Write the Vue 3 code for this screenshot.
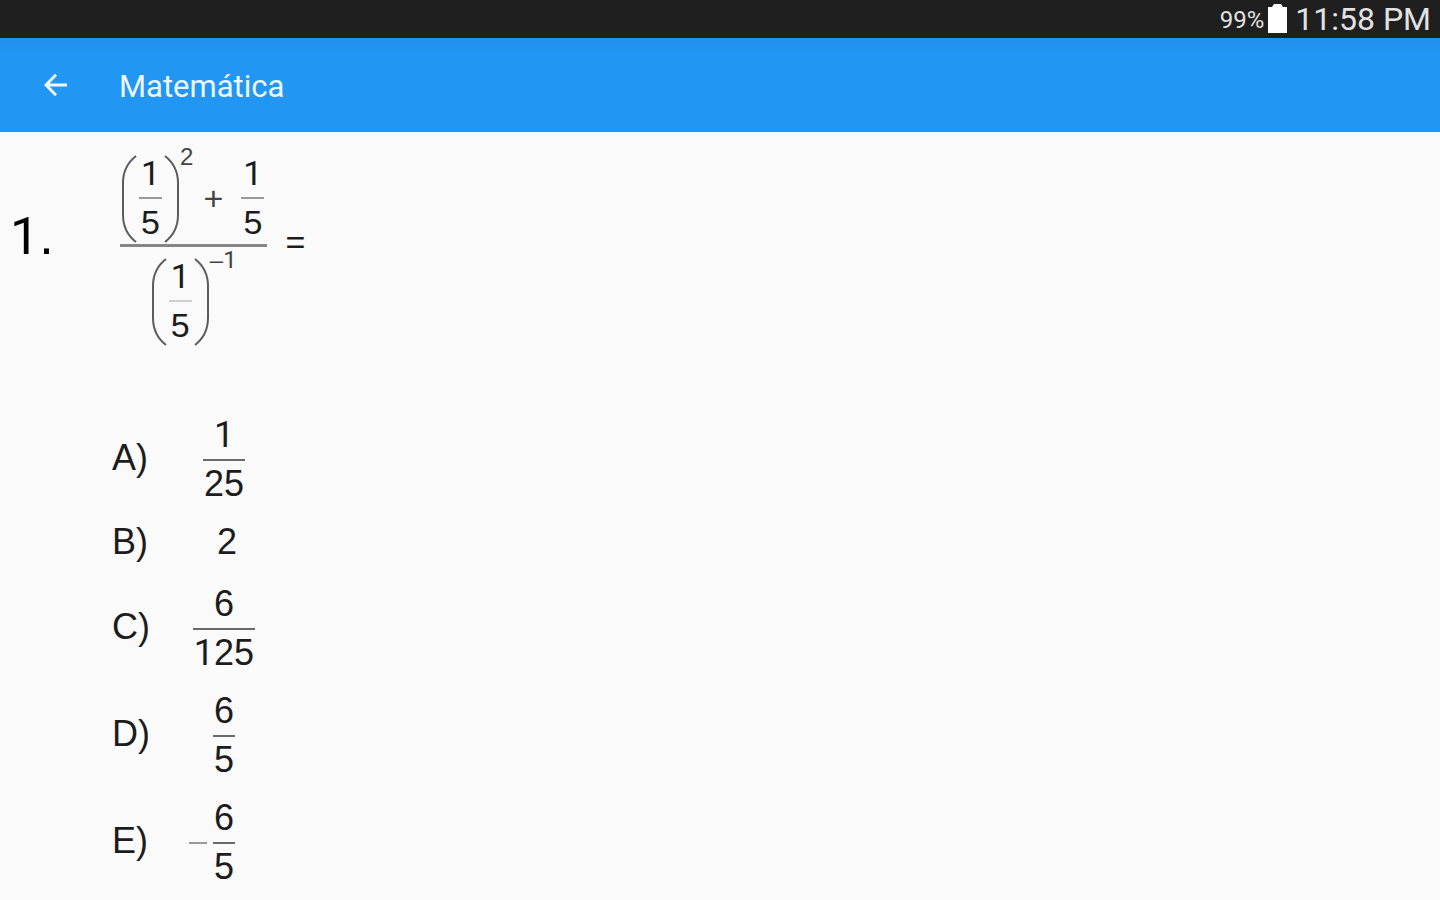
<script setup>
const digits = (text) => text.split('')

const answers = [
  { label: 'A)', num: '1', den: '25' },
  { label: 'B)', whole: '2' },
  { label: 'C)', num: '6', den: '125' },
  { label: 'D)', num: '6', den: '5' },
  { label: 'E)', num: '6', den: '5', negative: true }
]
</script>

<template>
  <div class="app">
    <div class="status">
      <span class="percent">99%</span>
      <svg class="battery" width="19" height="30" viewBox="0 0 19 30" aria-hidden="true">
        <path d="M6 0h7l2 3h4v26H0V3h4z" fill="#fff" />
      </svg>
      <span class="clock">11:58 PM</span>
    </div>

    <header class="toolbar">
      <button class="back" type="button" aria-label="Back">
        <svg width="24" height="24" viewBox="0 0 24 24" aria-hidden="true">
          <path d="M23 12H2.500M12 1.800L2 12L12 22.200" fill="none" stroke="#eef7ff" stroke-width="3" />
        </svg>
      </button>
      <h1 class="title">Matemática</h1>
    </header>

    <main class="content">
      <section class="question">
        <div class="number"><span class="one">1</span>.</div>
        <div class="expression">
          <div class="term">
            <svg class="paren" width="16" height="88" viewBox="0 0 16 88" aria-hidden="true">
              <path d="M15 1C6 8 2 16 2 28V60C2 72 6 80 15 87" />
            </svg>
            <span class="fraction small">
              <span class="num"><span class="one">1</span></span>
              <span class="den">5</span>
            </span>
            <svg class="paren" width="16" height="88" viewBox="0 0 16 88" aria-hidden="true">
              <path d="M1 1C10 8 14 16 14 28V60C14 72 10 80 1 87" />
            </svg>
            <span class="power">2</span>
            <span class="plus">+</span>
            <span class="fraction small">
              <span class="num"><span class="one">1</span></span>
              <span class="den">5</span>
            </span>
          </div>
          <div class="term below">
            <svg class="paren" width="16" height="88" viewBox="0 0 16 88" aria-hidden="true">
              <path d="M15 1C6 8 2 16 2 28V60C2 72 6 80 15 87" />
            </svg>
            <span class="fraction small faint">
              <span class="num"><span class="one">1</span></span>
              <span class="den">5</span>
            </span>
            <svg class="paren" width="16" height="88" viewBox="0 0 16 88" aria-hidden="true">
              <path d="M1 1C10 8 14 16 14 28V60C14 72 10 80 1 87" />
            </svg>
            <span class="power">–<span class="one">1</span></span>
          </div>
        </div>
        <span class="equals">=</span>
      </section>

      <ul class="answers">
        <li v-for="answer in answers" :key="answer.label" class="answer">
          <span class="label">{{ answer.label }}</span>
          <span class="value">
            <span v-if="answer.negative" class="minus" role="img" aria-label="minus"></span>
            <span v-if="answer.whole" class="whole">{{ answer.whole }}</span>
            <span v-else class="fraction">
              <span class="num"><span v-for="(d, i) in digits(answer.num)" :key="i" :class="{ one: d === '1' }">{{ d }}</span></span>
              <span class="den"><span v-for="(d, i) in digits(answer.den)" :key="i" :class="{ one: d === '1' }">{{ d }}</span></span>
            </span>
          </span>
        </li>
      </ul>
    </main>
  </div>
</template>

<style>
body {
  margin: 0;
  background: #fafafa;
}
</style>

<style scoped>
.app {
  font-family: "Liberation Sans", Arial, sans-serif;
  color: #1c1c1c;
}

.status {
  display: flex;
  align-items: center;
  justify-content: flex-end;
  height: 38px;
  box-sizing: border-box;
  padding-right: 9px;
  background: #1f1f1f;
  color: #e2e2e2;
  font-family: Roboto, sans-serif;
}

.percent {
  font-size: 24px;
  line-height: 28px;
  padding-top: 2px;
}

.battery {
  margin: 0 8px 0 4px;
}

.clock {
  font-size: 32px;
  line-height: 38px;
}

.toolbar {
  display: flex;
  align-items: center;
  height: 94px;
  background: linear-gradient(#2390e9, #2196f3 16px);
}

.back {
  display: flex;
  justify-content: center;
  width: 112px;
  padding: 0;
  border: 0;
  background: none;
}

.title {
  margin: 0 0 0 7px;
  padding-top: 4px;
  font: 400 31px/36px Roboto, sans-serif;
  color: #eef7ff;
}

.content {
  padding: 23px 8px 0;
}

.question {
  display: flex;
  align-items: flex-start;
}

.number {
  box-sizing: border-box;
  width: 112px;
  margin-top: 55px;
  padding-left: 2px;
  font-size: 52px;
  line-height: 52px;
  color: #000;
}

.one {
  font-family: Roboto, sans-serif;
  line-height: 0;
}

.term {
  display: flex;
  align-items: flex-start;
  justify-content: center;
  padding: 0 1px;
}

.below {
  margin-top: 1px;
  padding-top: 11px;
  border-top: 3px solid #858585;
}

.paren {
  flex: none;
  fill: none;
  stroke: #5c5c5c;
  stroke-width: 2;
}

.fraction {
  display: inline-flex;
  flex-direction: column;
  align-items: stretch;
  padding-top: 4px;
  font-size: 36px;
  line-height: 36px;
  text-align: center;
}

.num {
  padding: 0 1px 6px;
  border-bottom: 2px solid #6a6a6a;
}

.den {
  padding: 5px 1px 0;
}

.small {
  margin: 0 2px;
  padding-top: 0;
  font-size: 34px;
}

.small .num {
  padding: 0 2px 6px;
  border-color: #9a9a9a;
}

.faint .num {
  border-color: #cfcfcf;
}

.power {
  margin-top: -10px;
  font-size: 24px;
  line-height: 24px;
  color: #444;
}

.plus {
  margin: 25px 16px 0 10px;
  font-size: 34px;
  line-height: 36px;
  color: #444;
}

.equals {
  margin: 69px 0 0 18px;
  font-size: 34px;
  line-height: 36px;
}

.answers {
  display: flex;
  flex-direction: column;
  gap: 18px;
  margin: 67px 0 0;
  padding: 0 0 0 104px;
  list-style: none;
}

.answer {
  display: flex;
  align-items: center;
  min-height: 44px;
  font-size: 36px;
  line-height: 36px;
}

.label {
  width: 76px;
}

.value {
  display: flex;
  align-items: center;
  justify-content: center;
  width: 72px;
}

.whole {
  padding-left: 6px;
}

.minus {
  width: 18px;
  height: 2px;
  margin: 5px 6px 0 -24px;
  background: #999;
}
</style>
